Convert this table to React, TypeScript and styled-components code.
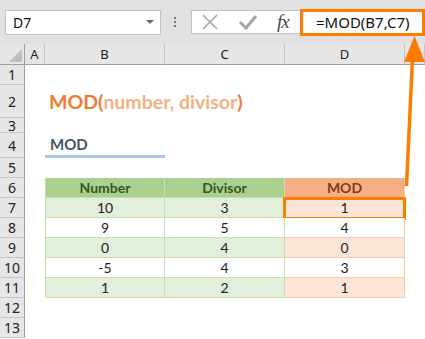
import React from 'react'
import styled, { createGlobalStyle } from 'styled-components'

const GlobalStyle = createGlobalStyle`
    html, body {
        margin: 0;
        padding: 0;
        background: #fff;
    }
    body {
        font-family: Lato, "Liberation Sans", sans-serif;
    }
`

const ORANGE = '#ff7c00'

const Window = styled.div`
    position: relative;
    width: 425px;
    height: 339px;
    overflow: hidden;
    background: #fff;
`

const FormulaBar = styled.div`
    display: flex;
    align-items: center;
    height: 44px;
    padding-left: 5px;
    background: #e1e1e1;
    font-family: "Noto Sans", "Open Sans", sans-serif;
`

const NameBox = styled.div`
    display: flex;
    align-items: center;
    justify-content: space-between;
    box-sizing: border-box;
    width: 156px;
    height: 25px;
    padding: 0 6px 0 7px;
    background: #fff;
    border: 1px solid #c3c3c3;
    font-size: 14px;
    color: #111;
`

const DropArrow = styled.span`
    width: 0;
    height: 0;
    border-left: 4px solid transparent;
    border-right: 4px solid transparent;
    border-top: 4px solid #6a6a6a;
`

const Grip = styled.div`
    display: flex;
    flex-direction: column;
    gap: 2px;
    margin: 0 15px 0 13px;
    span {
        width: 2px;
        height: 2px;
        background: #7a7a7a;
    }
`

const Buttons = styled.div`
    display: flex;
    align-items: center;
    box-sizing: border-box;
    width: 109px;
    height: 24px;
    padding-left: 9px;
    gap: 19px;
    background: #fff;
    border: 1px solid #c3c3c3;
    border-right: none;
`

const Fx = styled.span`
    font-family: "Liberation Serif", serif;
    font-style: italic;
    font-size: 19px;
    color: #4a4a4a;
    letter-spacing: -1px;
`

const FormulaInput = styled.div`
    display: flex;
    align-items: center;
    box-sizing: border-box;
    flex: 1;
    height: 27px;
    padding-left: 13px;
    background: #fff;
    border: 3px solid ${ORANGE};
    font-size: 15px;
    color: #111;
`

const Grid = styled.div`
    display: grid;
    grid-template-columns: 25px 20px 120px 120px 120px 1fr;
    grid-template-rows: 21px 20px 33px 15px 25px 20px repeat(8, 20px);
`

const ColHead = styled.div`
    display: flex;
    align-items: center;
    justify-content: center;
    box-sizing: border-box;
    background: #e6e6e6;
    border-right: 1px solid #c6c6c6;
    border-bottom: 1px solid #9f9f9f;
    font-family: "Noto Sans", "Open Sans", sans-serif;
    font-size: 13px;
    color: #222;
`

const Corner = styled(ColHead)`
    align-items: flex-end;
    justify-content: flex-end;
    padding: 0 2px 2px 0;
    border-right-color: #9f9f9f;
`

const RowHead = styled.div`
    display: flex;
    align-items: center;
    justify-content: center;
    box-sizing: border-box;
    background: #e6e6e6;
    border-right: 1px solid #9f9f9f;
    border-bottom: 1px solid #c6c6c6;
    font-family: "Noto Sans", "Open Sans", sans-serif;
    font-size: 14px;
    color: #222;
`

const Cell = styled.div`
    position: relative;
    display: flex;
    align-items: center;
    box-sizing: border-box;
    font-size: 14px;
    color: #222;
`

const Title = styled(Cell)`
    padding-left: 4px;
    white-space: nowrap;
    font-size: 19.5px;
    font-weight: 700;
    color: #ed7d31;
    span {
        color: #f4b084;
    }
`

const Heading = styled(Cell)`
    padding-left: 5px;
    border-bottom: 3px solid #a9c8e8;
    font-size: 15px;
    font-weight: 700;
    color: #44546a;
`

type Tone = 'green' | 'orange'

const tones = {
    green: { head: '#a9d08e', headText: '#375623', band: '#e2efda', line: '#c6e0b4' },
    orange: { head: '#f4b084', headText: '#833c0c', band: '#fce4d6', line: '#f8cbad' },
}

const TableCell = styled(Cell)<{ $tone: Tone; $head?: boolean; $band?: boolean; $first?: boolean }>`
    justify-content: center;
    background: ${(p) => (p.$head ? tones[p.$tone].head : p.$band ? tones[p.$tone].band : '#fff')};
    border-right: 1px solid ${(p) => tones[p.$tone].line};
    border-bottom: 1px solid ${(p) => tones[p.$tone].line};
    border-left: ${(p) => (p.$first ? `1px solid ${tones[p.$tone].line}` : 'none')};
    font-weight: ${(p) => (p.$head ? 700 : 400)};
    color: ${(p) => (p.$head ? tones[p.$tone].headText : '#222')};
`

const Selection = styled.div`
    position: absolute;
    top: -1px;
    left: -2px;
    right: -2px;
    bottom: -3px;
    border: 3px solid ${ORANGE};
    pointer-events: none;
`

const Overlay = styled.svg`
    position: absolute;
    top: 0;
    left: 0;
    pointer-events: none;
`

const rows = [
    [10, 3, 1],
    [9, 5, 4],
    [0, 4, 0],
    [-5, 4, 3],
    [1, 2, 1],
]

const Empty = () => (
    <>
        <Cell />
        <Cell />
        <Cell />
        <Cell />
        <Cell />
    </>
)

const App = () => (
    <Window>
        <GlobalStyle />
        <FormulaBar>
            <NameBox>
                D7
                <DropArrow />
            </NameBox>
            <Grip>
                <span />
                <span />
                <span />
            </Grip>
            <Buttons>
                <svg width="18" height="18" viewBox="0 0 18 18">
                    <path d="M2 2 L16 16 M16 2 L2 16" stroke="#a6a6a6" strokeWidth="1.6" fill="none" />
                </svg>
                <svg width="20" height="18" viewBox="0 0 20 18">
                    <path d="M2 9 L8 15 L18 3" stroke="#a6a6a6" strokeWidth="3" fill="none" />
                </svg>
                <Fx>fx</Fx>
            </Buttons>
            <FormulaInput>=MOD(B7,C7)</FormulaInput>
        </FormulaBar>

        <Grid>
            <Corner>
                <svg width="13" height="13" viewBox="0 0 13 13">
                    <path d="M13 0 L13 13 L0 13 Z" fill="#bdbdbd" />
                </svg>
            </Corner>
            <ColHead>A</ColHead>
            <ColHead>B</ColHead>
            <ColHead>C</ColHead>
            <ColHead>D</ColHead>
            <ColHead />

            <RowHead>1</RowHead>
            <Empty />

            <RowHead>2</RowHead>
            <Cell />
            <Title>
                MOD(<span>number, divisor</span>)
            </Title>
            <Cell />
            <Cell />
            <Cell />

            <RowHead>3</RowHead>
            <Empty />

            <RowHead>4</RowHead>
            <Cell />
            <Heading>MOD</Heading>
            <Cell />
            <Cell />
            <Cell />

            <RowHead>5</RowHead>
            <Empty />

            <RowHead>6</RowHead>
            <Cell />
            <TableCell $tone="green" $head $first>
                Number
            </TableCell>
            <TableCell $tone="green" $head>
                Divisor
            </TableCell>
            <TableCell $tone="orange" $head>
                MOD
            </TableCell>
            <Cell />

            {rows.map(([n, d, m], i) => (
                <React.Fragment key={i}>
                    <RowHead>{7 + i}</RowHead>
                    <Cell />
                    <TableCell $tone="green" $band={i % 2 === 0} $first>
                        {n}
                    </TableCell>
                    <TableCell $tone="green" $band={i % 2 === 0}>
                        {d}
                    </TableCell>
                    <TableCell $tone="orange" $band={i % 2 === 0}>
                        {m}
                        {i === 0 && <Selection />}
                    </TableCell>
                    <Cell />
                </React.Fragment>
            ))}

            <RowHead>12</RowHead>
            <Empty />
            <RowHead>13</RowHead>
            <Empty />
        </Grid>

        <Overlay width="425" height="339" viewBox="0 0 425 339">
            <line x1="406.5" y1="186" x2="412.5" y2="58" stroke={ORANGE} strokeWidth="3.5" />
            <polygon points="414.5,36 404,62 425,62" fill={ORANGE} />
        </Overlay>
    </Window>
)

export default App
